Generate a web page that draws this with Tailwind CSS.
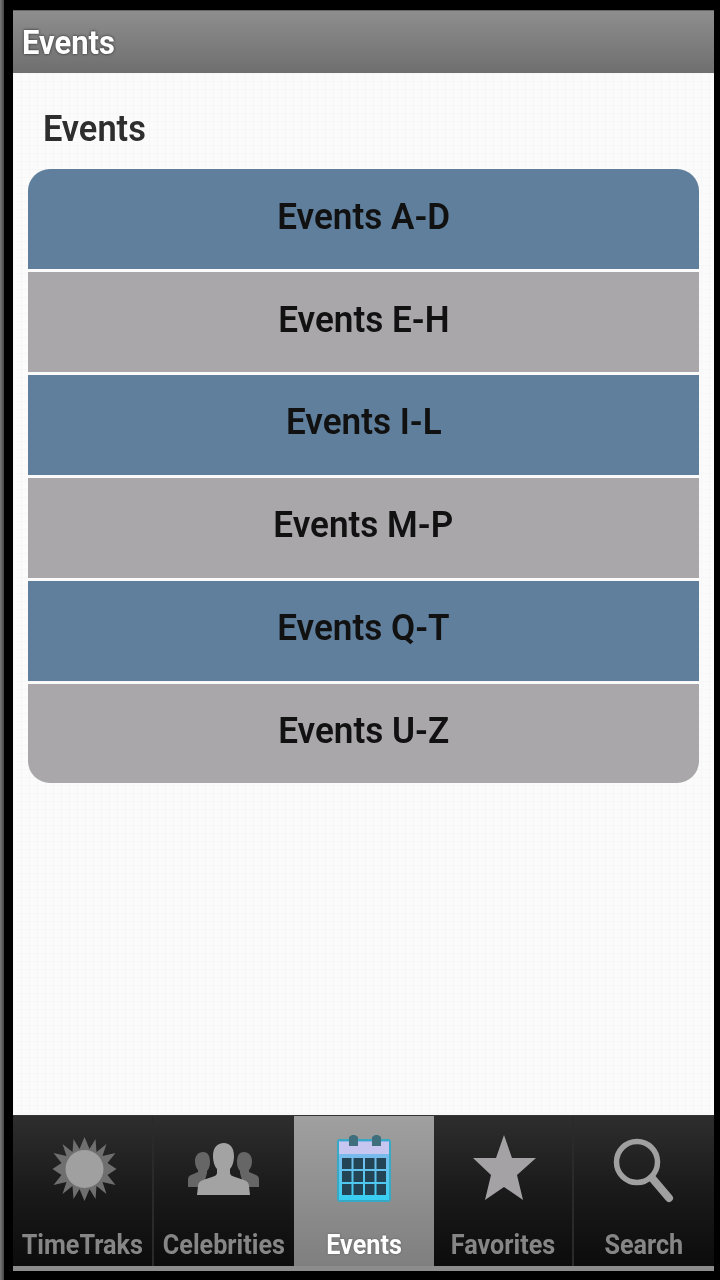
<!DOCTYPE html>
<html>
<head>
<meta charset="utf-8">
<script src="https://cdn.jsdelivr.net/npm/@tailwindcss/browser@4"></script>
</head>
<body class="m-0 bg-black">
<div class="w-[720px] h-[1280px] bg-black flex font-['Roboto',sans-serif] overflow-hidden blur-[0.6px]">
  <div class="w-[4px] h-full shrink-0 bg-gradient-to-r from-[#7a7a7a] to-[#444]"></div>
  <div class="w-[9px] h-full shrink-0 bg-black"></div>
  <div class="w-[701px] h-full shrink-0 flex flex-col pt-[10px]">
    <header class="h-[63px] shrink-0 flex items-center pl-[9px] bg-gradient-to-b from-[#8e8e8e] to-[#6f6f6f] border-t border-[#666]">
      <span class="text-[34px] leading-none font-bold text-white origin-left scale-x-[0.91] [text-shadow:0_0_3px_#222]">Events</span>
    </header>
    <main class="h-[1042px] shrink-0 bg-[#fbfbfb] bg-[linear-gradient(#f7f7f7_1px,transparent_1px),linear-gradient(90deg,#f7f7f7_1px,transparent_1px)] bg-[size:8px_8px] pt-[36px] px-[15px] flex flex-col">
      <h1 class="h-[40px] pl-[16px] text-[37px] leading-[40px] font-semibold text-[#2e2e2e] origin-left scale-x-[0.93]">Events</h1>
      <div class="mt-[20px] w-[671px] flex flex-col gap-[3px] text-[36px] font-semibold text-[#111] text-center">
        <div class="h-[100px] pb-[4px] bg-[#5f7f9c] rounded-t-[22px] flex items-center justify-center"><span class="scale-x-[0.975]">Events A-D</span></div>
        <div class="h-[100px] pb-[5px] bg-[#a9a7aa] flex items-center justify-center"><span class="scale-x-[0.975]">Events E-H</span></div>
        <div class="h-[100px] pb-[6px] bg-[#5f7f9c] flex items-center justify-center"><span class="scale-x-[0.975]">Events I-L</span></div>
        <div class="h-[100px] pb-[6px] bg-[#a9a7aa] flex items-center justify-center"><span class="scale-x-[0.975]">Events M-P</span></div>
        <div class="h-[100px] pb-[6px] bg-[#5f7f9c] flex items-center justify-center"><span class="scale-x-[0.975]">Events Q-T</span></div>
        <div class="h-[99px] pb-[6px] bg-[#a9a7aa] rounded-b-[22px] flex items-center justify-center"><span class="scale-x-[0.975]">Events U-Z</span></div>
      </div>
    </main>
    <nav class="h-[151px] shrink-0 flex border-t border-[#333] text-[28px] font-bold text-[#868686]">
      <div class="w-[141px] h-full flex flex-col items-center pt-[16px] bg-gradient-to-b from-[#2e2e2e] via-[#1a1a1a] to-[#0c0c0c] border-r-2 border-[#2a2a2a]">
        <svg class="w-[72px] h-[72px]" viewBox="0 0 72 72">
          <polygon fill="#6f6f6f" transform="translate(1.5 1)" points="36,4 41,16 47,6 48,19 58,11 54,23 67,20 59,30 68,36 59,42 67,52 54,49 58,61 48,53 47,66 41,56 36,68 31,56 25,66 24,53 14,61 18,49 5,52 13,42 4,36 13,30 5,20 18,23 14,11 24,19 25,6 31,16"/>
          <circle cx="37.5" cy="37" r="19" fill="#a0a0a0"/>
        </svg>
        <span class="mt-[24px] leading-[34px] scale-x-[0.9] whitespace-nowrap">TimeTraks</span>
      </div>
      <div class="w-[140px] h-full flex flex-col items-center pt-[16px] bg-gradient-to-b from-[#2e2e2e] via-[#1a1a1a] to-[#0c0c0c]">
        <svg class="w-[72px] h-[72px]" viewBox="0 0 72 72">
          <path fill="#666" d="M15 20c5 0 7 4 7 10 0 4-1 7-3 9v2l-4 14H0v-7c0-3 1-4 3-5l7-3v-2c-2-2-3-5-3-9 0-5 3-9 8-9zM56 20c-5 0-7 4-7 10 0 4 1 7 3 9v2l4 14h15v-7c0-3-1-4-3-5l-7-3v-2c2-2 3-5 3-9 0-5-3-9-8-9z"/>
          <path fill="#a3a3a3" d="M36 11c6 0 10 5 10 13 0 6-2 11-4 13v4c0 2 2 3 5 4l9 3c3 1 5 3 5 6l1 9H9l1-9c0-3 2-5 5-6l9-3c3-1 5-2 5-4v-4c-2-2-4-7-4-13 0-8 4-13 11-13z"/>
        </svg>
        <span class="mt-[24px] leading-[34px] scale-x-[0.9] whitespace-nowrap">Celebrities</span>
      </div>
      <div class="w-[140px] h-[155px] flex flex-col items-center pt-[16px] bg-gradient-to-b from-[#a0a0a0] to-[#7e7e7e] text-white">
        <svg class="w-[72px] h-[72px]" viewBox="0 0 72 72">
          <defs>
            <linearGradient id="calbody" x1="0" y1="0" x2="0" y2="1">
              <stop offset="0" stop-color="#8fb4ea"/>
              <stop offset="1" stop-color="#36d0f2"/>
            </linearGradient>
          </defs>
          <rect x="9" y="7" width="54" height="63" rx="3" fill="#38a9c4"/>
          <rect x="11" y="9" width="50" height="59" fill="url(#calbody)"/>
          <rect x="11" y="10" width="50" height="12" fill="#c6c6f0"/>
          <path fill="#3f6f7c" d="M21 5l3-2h3l3 2v9h-9zM44 5l3-2h3l3 2v9h-9z"/>
          <g fill="#234454">
            <rect x="14" y="26" width="9.5" height="11"/><rect x="25.5" y="26" width="9.5" height="11"/><rect x="37" y="26" width="9.5" height="11"/><rect x="48.5" y="26" width="9.5" height="11"/>
            <rect x="14" y="39" width="9.5" height="11"/><rect x="25.5" y="39" width="9.5" height="11"/><rect x="37" y="39" width="9.5" height="11"/><rect x="48.5" y="39" width="9.5" height="11"/>
            <rect x="14" y="52" width="9.5" height="11"/><rect x="25.5" y="52" width="9.5" height="11"/><rect x="37" y="52" width="9.5" height="11"/><rect x="48.5" y="52" width="9.5" height="11"/>
          </g>
        </svg>
        <span class="mt-[24px] leading-[34px] scale-x-[0.9] whitespace-nowrap [text-shadow:0_0_2px_#555]">Events</span>
      </div>
      <div class="w-[140px] h-full flex flex-col items-center pt-[16px] bg-gradient-to-b from-[#2e2e2e] via-[#1a1a1a] to-[#0c0c0c] border-r-2 border-[#2a2a2a]">
        <svg class="w-[72px] h-[72px]" viewBox="0 0 72 72">
          <polygon fill="#a4a2a5" points="37,3 45,26 69,26 50,43 56,68 37,55 18,68 24,43 6,26 29,26"/>
        </svg>
        <span class="mt-[24px] leading-[34px] scale-x-[0.9] whitespace-nowrap">Favorites</span>
      </div>
      <div class="w-[140px] h-full flex flex-col items-center pt-[16px] bg-gradient-to-b from-[#2e2e2e] via-[#1a1a1a] to-[#0c0c0c]">
        <svg class="w-[72px] h-[72px]" viewBox="0 0 72 72">
          <circle cx="29" cy="30" r="20.5" fill="none" stroke="#a0a0a0" stroke-width="5.5"/>
          <path d="M44 46L61 66" stroke="#a0a0a0" stroke-width="8" stroke-linecap="round"/>
        </svg>
        <span class="mt-[24px] leading-[34px] scale-x-[0.9] whitespace-nowrap">Search</span>
      </div>
    </nav>
    <div class="h-[5px] shrink-0 bg-[#8c8c8c]"></div>
  </div>
</div>
</body>
</html>
